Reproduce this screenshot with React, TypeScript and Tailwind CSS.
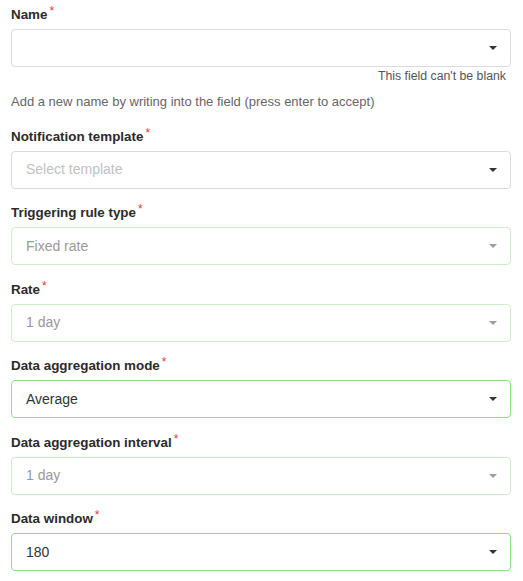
import React from "react";

type FieldProps = {
  label: string;
  value?: string;
  placeholder?: string;
  variant: "gray" | "disabled" | "active";
  first?: boolean;
  children?: React.ReactNode;
};

function Field({ label, value, placeholder, variant, first, children }: FieldProps) {
  const border =
    variant === "gray"
      ? "border-[#dcdcdc]"
      : variant === "disabled"
      ? "border-[#cdf0c9]"
      : "border-[#8ee38a]";
  const textColor = value
    ? variant === "disabled"
      ? "text-[#9a9a9a]"
      : "text-[#333333]"
    : "text-[#c2c2c2]";
  const caret = variant === "disabled" ? "border-t-[#9e9e9e]" : "border-t-[#333333]";
  return (
    <div className={first ? "" : "mt-[15.5px]"}>
      <div className="flex items-start text-[13.4px] leading-[18px] font-bold text-[#2b2b2b] mb-[5px]">
        <span>{label}</span>
        <span className="ml-[2px] text-[12px] font-normal text-[#e53935] relative top-[-4px]">*</span>
      </div>
      <div
        className={`h-[38px] w-[500px] rounded-[4px] border ${border} bg-white flex items-center pl-[14px] pr-[13px]`}
      >
        <span className={`flex-1 text-[14px] ${textColor}`}>{value || placeholder || ""}</span>
        <span
          className={`w-0 h-0 border-l-[4px] border-r-[4px] border-t-[4px] border-l-transparent border-r-transparent ${caret}`}
        />
      </div>
      {children}
    </div>
  );
}

export default function App() {
  return (
    <div
      className="w-[523px] h-[581px] bg-white pl-[11px] pt-[6px] overflow-hidden"
      style={{ fontFamily: '"Liberation Sans", Arial, sans-serif' }}
    >
      <Field label="Name" variant="gray" first>
        <div className="mt-[1px] w-[495px] text-right text-[12.3px] leading-[16px] text-[#555555]">
          This field can't be blank
        </div>
        <div className="mt-[8.5px] text-[13px] leading-[18px] text-[#666666]">
          Add a new name by writing into the field (press enter to accept)
        </div>
        <div className="h-[1.5px]" />
      </Field>
      <Field label="Notification template" placeholder="Select template" variant="gray" />
      <Field label="Triggering rule type" value="Fixed rate" variant="disabled" />
      <Field label="Rate" value="1 day" variant="disabled" />
      <Field label="Data aggregation mode" value="Average" variant="active" />
      <Field label="Data aggregation interval" value="1 day" variant="disabled" />
      <Field label="Data window" value="180" variant="active" />
    </div>
  );
}
